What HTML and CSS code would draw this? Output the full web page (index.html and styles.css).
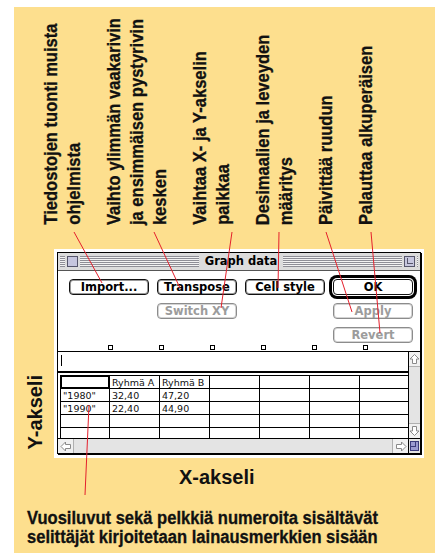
FILE: index.html
```html
<!DOCTYPE html>
<html>
<head>
    <meta charset="utf-8">
    <title>Graph data</title>
    <link rel="stylesheet" href="styles.css">
</head>
<body>
    <div class="panel">
        <div class="notes">
            <div class="note">Tiedostojen tuonti muista<br>ohjelmista</div>
            <div class="note">Vaihto ylimmän vaakarivin<br>ja ensimmäisen pystyrivin<br>kesken</div>
            <div class="note">Vaihtaa X- ja Y-akselin<br>paikkaa</div>
            <div class="note">Desimaalien ja leveyden<br>määritys</div>
            <div class="note">Päivittää ruudun</div>
            <div class="note">Palauttaa alkuperäisen</div>
        </div>

        <div class="stage">
            <div class="axis-y">Y-akseli</div>
            <div class="mat">
                <div class="window">
                    <div class="titlebar">
                        <span class="close-box"></span>
                        <span class="title">Graph data</span>
                        <span class="zoom-box"></span>
                    </div>

                    <div class="controls">
                        <button class="btn">Import...</button>
                        <button class="btn">Transpose</button>
                        <button class="btn">Cell style</button>
                        <button class="btn default">OK</button>
                        <button class="btn switch" disabled>Switch XY</button>
                        <button class="btn apply" disabled>Apply</button>
                        <button class="btn revert" disabled>Revert</button>
                    </div>

                    <div class="handles">
                        <span></span><span></span><span></span><span></span><span></span><span></span>
                    </div>

                    <div class="body">
                        <div class="main">
                            <div class="entry"><span class="caret"></span></div>
                            <div class="sheet">
                                <div class="cell selected"></div>
                                <div class="cell">Ryhmä A</div>
                                <div class="cell">Ryhmä B</div>
                                <div class="cell"></div><div class="cell"></div><div class="cell"></div><div class="cell"></div>

                                <div class="cell">"1980"</div>
                                <div class="cell">32,40</div>
                                <div class="cell">47,20</div>
                                <div class="cell"></div><div class="cell"></div><div class="cell"></div><div class="cell"></div>

                                <div class="cell">"1990"</div>
                                <div class="cell">22,40</div>
                                <div class="cell">44,90</div>
                                <div class="cell"></div><div class="cell"></div><div class="cell"></div><div class="cell"></div>

                                <div class="cell"></div><div class="cell"></div><div class="cell"></div><div class="cell"></div><div class="cell"></div><div class="cell"></div><div class="cell"></div>
                                <div class="cell"></div><div class="cell"></div><div class="cell"></div><div class="cell"></div><div class="cell"></div><div class="cell"></div><div class="cell"></div>
                            </div>
                        </div>
                        <div class="vscroll">
                            <span class="arrow">
                                <svg width="11" height="12" viewBox="0 0 11 12"><path d="M5.5 1.5 L10 6 H7.5 V10.5 H3.5 V6 H1 Z" fill="#fff" stroke="#8a8a8a"/></svg>
                            </span>
                            <span class="track"></span>
                            <span class="arrow">
                                <svg width="11" height="12" viewBox="0 0 11 12"><path d="M5.5 10.5 L10 6 H7.5 V1.5 H3.5 V6 H1 Z" fill="#fff" stroke="#8a8a8a"/></svg>
                            </span>
                        </div>
                    </div>

                    <div class="hscroll">
                        <div class="hbar">
                            <span class="arrow">
                                <svg width="14" height="13" viewBox="0 0 14 13"><path d="M2 6.5 L6.5 2 V4.5 H11.5 V8.5 H6.5 V11 Z" fill="#fff" stroke="#8a8a8a"/></svg>
                            </span>
                            <span class="track"></span>
                            <span class="arrow">
                                <svg width="14" height="13" viewBox="0 0 14 13"><path d="M12 6.5 L7.5 2 V4.5 H2.5 V8.5 H7.5 V11 Z" fill="#fff" stroke="#8a8a8a"/></svg>
                            </span>
                        </div>
                        <div class="grow">
                            <svg width="11" height="14" viewBox="0 0 11 14"><rect x="1" y="2" width="9" height="10" fill="#9a9ad0"/><rect x="1.5" y="2.5" width="5" height="5" fill="none" stroke="#3a3a7a"/><rect x="1.5" y="2.5" width="8" height="9" fill="none" stroke="#3a3a7a"/></svg>
                        </div>
                    </div>
                </div>
            </div>
        </div>

        <div class="axis-x">X-akseli</div>

        <p class="footnote">Vuosiluvut sekä pelkkiä numeroita sisältävät<br>selittäjät kirjoitetaan lainausmerkkien sisään</p>

        <!-- leader lines from the notes to the controls -->
        <svg class="leaders" width="421" height="546">
            <line x1="60" y1="225" x2="88" y2="276"/>
            <line x1="140" y1="225" x2="166" y2="281"/>
            <line x1="218" y1="225" x2="207" y2="301"/>
            <line x1="265" y1="225" x2="264" y2="281"/>
            <line x1="312" y1="225" x2="338" y2="305"/>
            <line x1="357" y1="225" x2="366" y2="326"/>
            <line x1="75" y1="398" x2="71" y2="488"/>
        </svg>
    </div>
</body>
</html>
```

FILE: styles.css
```css
body {
    margin: 0;
    background: #fff;
    font-family: "Liberation Sans", Arial, sans-serif;
    color: #111;
}

.panel {
    position: relative;
    width: 421px;
    height: 546px;
    margin: 7px 0 0 14px;
    background: #fddf8e;
}

/* rotated captions above the window, squeezed to a condensed look */
.notes {
    display: flex;
    align-items: flex-end;
    gap: 17px;
    height: 218px;
    padding-left: 26px;
}

.note {
    writing-mode: vertical-rl;
    transform-origin: 50% 0;
    transform: translateY(100%) rotate(180deg) scaleY(0.92);
    white-space: nowrap;
    font-weight: bold;
    font-size: 18px;
    line-height: 23px;
    -webkit-text-stroke: 0.3px #111;
}

.stage {
    display: flex;
    gap: 8px;
    margin-top: 24px;
    padding-left: 10px;
}

.axis-y {
    align-self: flex-end;
    margin-bottom: 8px;
    writing-mode: vertical-rl;
    transform: rotate(180deg);
    font-weight: bold;
    font-size: 20px;
    line-height: 22px;
}

.mat {
    background: #fff;
    padding: 3px 3px 4px 3px;
}

.window {
    width: 362px;
    border: 1px solid #000;
    box-shadow: 1px 1px 0 #000;
    background: #fff;
    font-family: "DejaVu Sans", sans-serif;
}

.titlebar {
    display: flex;
    justify-content: space-between;
    align-items: center;
    height: 17px;
    padding: 0 5px 0 9px;
    border-bottom: 1px solid #555;
    background: repeating-linear-gradient(#8e8e96 0 1px, #f2f2f2 1px 2px) 2px 3px / calc(100% - 4px) 11px no-repeat, #dcdcdc;
}

.close-box,
.zoom-box {
    position: relative;
    width: 11px;
    height: 11px;
    box-sizing: border-box;
    border: 1px solid #55556a;
    background: #c6c6de;
    box-shadow: 0 0 0 2px #dcdcdc;
}

.zoom-box::after {
    content: "";
    position: absolute;
    right: 1px;
    top: 1px;
    width: 5px;
    height: 5px;
    border: 1px solid #55556a;
    border-top: none;
    border-right: none;
}

.title {
    padding: 0 6px;
    background: #dcdcdc;
    font-weight: bold;
    font-size: 11.5px;
    line-height: 17px;
    color: #000;
}

.controls {
    display: grid;
    grid-template-columns: repeat(4, 80px);
    grid-auto-rows: 16px;
    gap: 8px;
    height: 74px;
    box-sizing: border-box;
    padding: 8px 0 0 11px;
}

.btn {
    height: 16px;
    padding: 0;
    border: 1px solid #111;
    border-radius: 4px;
    box-shadow: inset 0 0 0 1px #9a9a9a;
    background: #fff;
    font-family: "DejaVu Sans", sans-serif;
    font-weight: bold;
    font-size: 11.5px;
    line-height: 14px;
    color: #000;
}

.btn:disabled {
    border-color: #8c8c8c;
    box-shadow: inset 0 0 0 1px #d4d4d4;
    color: #9c9c9c;
}

.btn.default {
    box-shadow: 0 0 0 1px #fff, 0 0 0 4px #000;
    border-radius: 4px;
}

.switch {
    grid-column: 2;
    grid-row: 2;
}

.apply {
    grid-column: 4;
    grid-row: 2;
}

.revert {
    grid-column: 4;
    grid-row: 3;
}

/* column width handles */
.handles {
    display: flex;
    gap: 46px;
    height: 6px;
    padding-left: 50px;
    border-bottom: 1px solid #000;
}

.handles span {
    width: 5px;
    height: 5px;
    box-sizing: border-box;
    border: 1px solid #000;
}

.body {
    display: grid;
    grid-template-columns: 350px 12px;
    height: 86px;
}

.main {
    overflow: hidden;
}

.entry {
    height: 16px;
    padding-left: 3px;
    border-bottom: 2px solid #000;
    margin-bottom: 2px;
}

.caret {
    display: block;
    width: 1px;
    height: 11px;
    margin-top: 3px;
    background: #000;
}

.sheet {
    display: grid;
    grid-template-columns: 49px repeat(6, 50px);
    grid-auto-rows: 13px;
    width: 356px;
    margin-left: 2px;
    border-top: 1px solid #000;
    border-left: 1px solid #000;
}

.cell {
    border-right: 1px solid #000;
    border-bottom: 1px solid #000;
    padding-left: 2px;
    font-size: 9.5px;
    line-height: 13px;
    white-space: nowrap;
    overflow: hidden;
}

.cell.selected {
    box-shadow: inset 1px 1px 0 #000, inset -1px -1px 0 #000;
}

.vscroll {
    display: flex;
    flex-direction: column;
    border-left: 1px solid #000;
    background: #e4e4e4;
}

.vscroll .arrow {
    display: flex;
    justify-content: center;
    align-items: center;
    height: 14px;
    background: #f0f0f0;
}

.vscroll .track {
    flex: 1;
    border-top: 1px solid #b0b0b0;
    border-bottom: 1px solid #b0b0b0;
}

.hscroll {
    display: grid;
    grid-template-columns: 350px 12px;
    height: 14px;
    border-top: 1px solid #000;
}

.hbar {
    display: flex;
    background: #e4e4e4;
}

.hbar .arrow {
    display: flex;
    justify-content: center;
    align-items: center;
    width: 15px;
    background: #f0f0f0;
}

.hbar .track {
    flex: 1;
    border-left: 1px solid #b0b0b0;
    border-right: 1px solid #b0b0b0;
}

.grow {
    display: flex;
    justify-content: center;
    align-items: center;
    border-left: 1px solid #000;
    background: #e4e4e4;
}

.axis-x {
    margin-top: 7px;
    padding-left: 165px;
    font-weight: bold;
    font-size: 20px;
    line-height: 24px;
}

.footnote {
    margin: 20px 0 0;
    padding-left: 13px;
    transform-origin: 13px 0;
    transform: scaleX(0.92);
    white-space: nowrap;
    font-weight: bold;
    font-size: 18px;
    line-height: 19px;
    -webkit-text-stroke: 0.3px #111;
}

.leaders {
    position: absolute;
    left: 0;
    top: 0;
    pointer-events: none;
}

.leaders line {
    stroke: #e4202c;
    stroke-width: 1;
}
```
